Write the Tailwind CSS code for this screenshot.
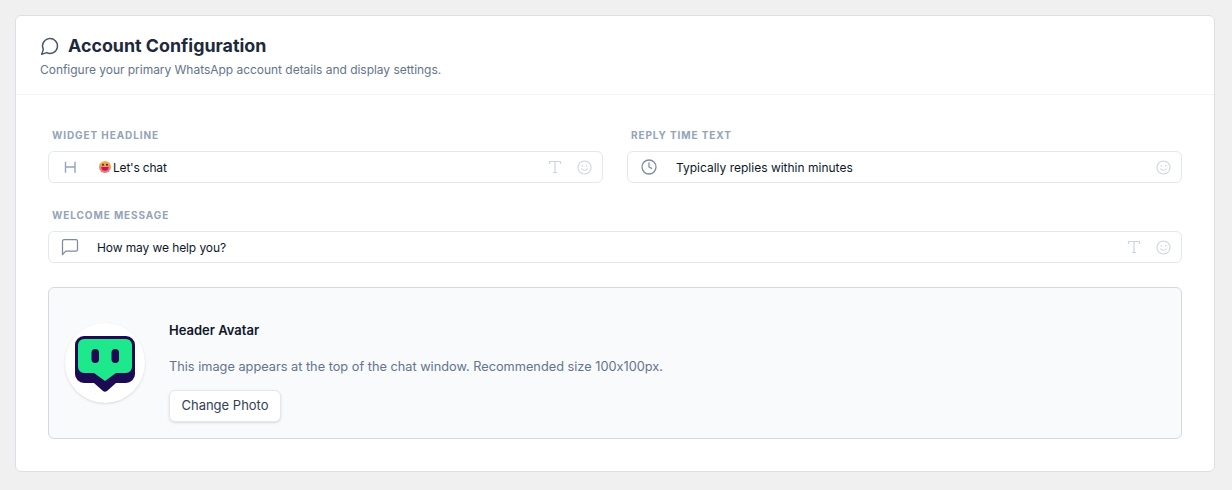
<!DOCTYPE html>
<html><head><meta charset="utf-8"><script src="https://cdn.jsdelivr.net/npm/@tailwindcss/browser@4"></script></head>
<body class="bg-[#f0f0f0] font-['Inter',sans-serif] [font-feature-settings:'calt'_0]">
<div class="p-[15px] pb-[18px]">
<div class="w-[1200px] h-[457px] bg-white border border-[#dcdfe3] rounded-md">
 <div class="h-[79px] px-[24px] pt-[19px] border-b border-[#f1f5f9]">
  <div class="flex items-center gap-[8px] h-[22px]">
   <svg class="w-5 h-5 text-[#475569]" viewBox="0 0 24 24" fill="none" stroke="currentColor" stroke-width="1.7" stroke-linecap="round" stroke-linejoin="round"><path d="M7.9 20A9 9 0 1 0 4 16.1L2 22Z"/></svg>
   <h2 class="text-[17.85px] font-bold text-[#1e293b]">Account Configuration</h2>
  </div>
  <p class="mt-[5px] text-[12px] leading-[16px] tracking-[-0.03px] text-[#64748b]">Configure your primary WhatsApp account details and display settings.</p>
 </div>
 <div class="px-[32px] pt-[34px]">
  <div class="grid grid-cols-2 gap-x-[24px]">
   <div>
    <label class="block pl-[4px] text-[10px] leading-[13px] font-bold tracking-[0.09em] text-[#94a3b8]">WIDGET HEADLINE</label>
    <div class="mt-[9px] h-[32px] border border-[#e2e8f0] rounded-md flex items-center text-[12px] text-[#0f172a]">
     <svg class="ml-[15px] w-[14px] h-[14px] text-[#94a3b8]" viewBox="0 0 14 14" fill="none" stroke="currentColor" stroke-width="1.4"><path d="M1.500 1.700v11M11 1.700v11M1.500 7h9.500"/></svg>
     <svg class="ml-[21px] w-[12px] h-[12px]" viewBox="0 0 12 12"><defs><linearGradient id="e" x1="0" y1="0" x2="0" y2="1"><stop offset="0" stop-color="#f5b13d"/><stop offset="1" stop-color="#ef6f8a"/></linearGradient></defs><circle cx="6" cy="6" r="6" fill="url(#e)"/><circle cx="4" cy="3.800" r="1" fill="#4a2a1a"/><circle cx="8" cy="3.800" r="1" fill="#4a2a1a"/><path d="M2.300 6h7.400a3.700 3.700 0 0 1-7.400 0Z" fill="#c2185b"/></svg>
     <span class="ml-[2px] pt-[1px] tracking-[-0.2px]">Let's chat</span>
     <svg class="ml-auto w-[14px] h-[14px] text-[#cbd5e1]" viewBox="0 0 14 14" fill="none" stroke="currentColor" stroke-width="1.2"><path d="M1.500 4V1.500h11V4M7 1.500v11M5 12.500h4"/></svg>
     <svg class="ml-[15px] mr-[10px] w-[15px] h-[15px] text-[#cbd5e1]" viewBox="0 0 24 24" fill="none" stroke="currentColor" stroke-width="1.700" stroke-linecap="round"><circle cx="12" cy="12" r="10.500"/><path d="M7.500 14a5.500 5.500 0 0 0 9 0"/><path stroke-width="2.600" d="M8.500 9.500h.01M15.500 9.500h.01"/></svg>
    </div>
   </div>
   <div>
    <label class="block pl-[4px] text-[10px] leading-[13px] font-bold tracking-[0.09em] text-[#94a3b8]">REPLY TIME TEXT</label>
    <div class="mt-[9px] h-[32px] border border-[#e2e8f0] rounded-md flex items-center text-[12px] text-[#0f172a]">
     <svg class="ml-[13px] w-[16px] h-[16px] text-[#7c8ba1]" viewBox="0 0 24 24" fill="none" stroke="currentColor" stroke-width="1.900" stroke-linecap="round" stroke-linejoin="round"><circle cx="12" cy="12" r="10.500"/><path d="M12 6v6l4 2"/></svg>
     <span class="ml-[19px] pt-[1px]">Typically replies within minutes</span>
     <svg class="ml-auto mr-[10px] w-[15px] h-[15px] text-[#cbd5e1]" viewBox="0 0 24 24" fill="none" stroke="currentColor" stroke-width="1.700" stroke-linecap="round"><circle cx="12" cy="12" r="10.500"/><path d="M7.500 14a5.500 5.500 0 0 0 9 0"/><path stroke-width="2.600" d="M8.500 9.500h.01M15.500 9.500h.01"/></svg>
    </div>
   </div>
  </div>
  <label class="block mt-[26px] pl-[4px] text-[10px] leading-[13px] font-bold tracking-[0.09em] text-[#94a3b8]">WELCOME MESSAGE</label>
  <div class="mt-[9px] h-[32px] border border-[#e2e8f0] rounded-md flex items-center text-[12px] text-[#0f172a]">
   <svg class="ml-[11px] w-[20px] h-[20px] text-[#7c8ba1]" viewBox="0 0 24 24" fill="none" stroke="currentColor" stroke-width="1.500" stroke-linecap="round" stroke-linejoin="round"><path d="M21 15a2 2 0 0 1-2 2H7l-4 4V5a2 2 0 0 1 2-2h14a2 2 0 0 1 2 2z"/></svg>
   <span class="ml-[17px] pt-[1px] tracking-[-0.1px]">How may we help you?</span>
   <svg class="ml-auto w-[14px] h-[14px] text-[#cbd5e1]" viewBox="0 0 14 14" fill="none" stroke="currentColor" stroke-width="1.2"><path d="M1.500 4V1.500h11V4M7 1.500v11M5 12.500h4"/></svg>
   <svg class="ml-[15px] mr-[10px] w-[15px] h-[15px] text-[#cbd5e1]" viewBox="0 0 24 24" fill="none" stroke="currentColor" stroke-width="1.700" stroke-linecap="round"><circle cx="12" cy="12" r="10.500"/><path d="M7.500 14a5.500 5.500 0 0 0 9 0"/><path stroke-width="2.600" d="M8.500 9.500h.01M15.500 9.500h.01"/></svg>
  </div>
  <div class="mt-[24px] h-[152px] bg-[#f8fafc] border border-[#d5d9df] rounded-md flex items-center pl-[16px]">
   <div class="w-[80px] h-[80px] rounded-full bg-white shadow-sm flex items-center justify-center shrink-0">
    <svg class="w-[60px] h-[56px] mt-[1px]" viewBox="0 0 60 56"><path d="M9 0H51A9 9 0 0 1 60 9V38A9 9 0 0 1 51 47H41L32 55Q30 56.500 28 55L19 47H9A9 9 0 0 1 0 38V9A9 9 0 0 1 9 0Z" fill="#1c0a52"/><path d="M9 3H51A6 6 0 0 1 57 9V31A6 6 0 0 1 51 37H41L30 45L19 37H9A6 6 0 0 1 3 31V9A6 6 0 0 1 9 3Z" fill="#1de88c"/><rect x="16.500" y="13" width="7.500" height="14" rx="3.750" fill="#1c0a52"/><rect x="36.500" y="13" width="7.500" height="14" rx="3.750" fill="#1c0a52"/></svg>
   </div>
   <div class="ml-[24px] pt-[17px]">
    <h3 class="text-[13px] leading-[16px] font-semibold text-[#0f172a]">Header Avatar</h3>
    <p class="mt-[21px] text-[12.75px] leading-[16px] text-[#64748b]">This image appears at the top of the chat window. Recommended size 100x100px.</p>
    <button class="mt-[15px] h-[32px] w-[112px] bg-white border border-[#e2e8f0] rounded-md shadow-sm text-[13px] pt-[1px] text-[#334155]">Change Photo</button>
   </div>
  </div>
 </div>
</div>
</div>
</body></html>
